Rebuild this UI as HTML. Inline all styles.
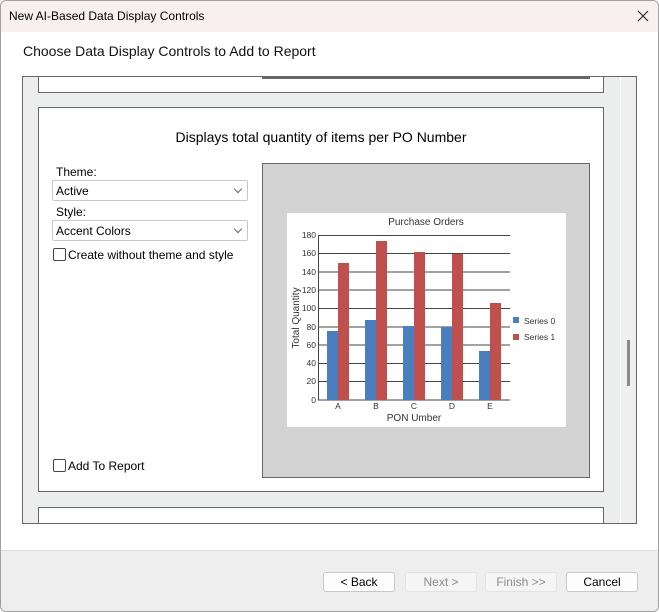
<!DOCTYPE html>
<html><head><style>
body{margin:0;width:659px;height:612px;overflow:hidden;font-family:"Liberation Sans",sans-serif;background:#fff;position:relative}
.a{position:absolute}
.t{font-size:12px;color:#000}
.sel{position:absolute;left:52px;width:196px;height:21px;border:1px solid #c8c8c8;background:#fff;border-radius:2px;font-size:12px;line-height:21px;box-sizing:border-box;padding-left:3px}
.sel:after{content:"";position:absolute;right:6px;top:5px;width:5px;height:5px;border-right:1px solid #666;border-bottom:1px solid #666;transform:rotate(45deg)}
.cb{position:absolute;width:11px;height:11px;border:1px solid #444;border-radius:2px;background:#fff}
.btn{position:absolute;top:572px;width:70px;height:18px;border:1px solid #c8c8c8;border-radius:3px;background:#fdfdfd;font-size:12px;text-align:center;line-height:18px}
.dis{color:#8a8a8a;background:#f5f5f5;border-color:#e2e2e2}
</style></head><body>
<div class="a" style="left:0;top:0;width:657px;height:610px;border:1px solid #a0a0a0;border-radius:6px;overflow:hidden;background:#fff">
<div class="a" style="left:0;top:0;width:657px;height:31px;background:#f8eff0"></div>
<div class="a t" style="left:8px;top:8px">New AI-Based Data Display Controls</div>
<svg class="a" style="left:636px;top:9px" width="12" height="12"><path d="M1 1L11 11M11 1L1 11" stroke="#222" stroke-width="1.1"/></svg>
<div class="a" style="left:22px;top:42px;font-size:14px;color:#111">Choose Data Display Controls to Add to Report</div>
<div class="a" style="left:0;top:549px;width:657px;height:61px;background:#eeeeee;border-top:1px solid #dcdcdc"></div>
</div>
<div class="a" style="left:22px;top:76px;width:613px;height:446px;border:1px solid #666;background:#eceeed;overflow:hidden">
 <div class="a" style="left:15px;top:-10px;width:564px;height:24px;border:1px solid #666;background:#fff"></div>
 <div class="a" style="left:239px;top:0;width:328px;height:2px;background:#666"></div>
 <div class="a" style="left:597px;top:0;width:1px;height:446px;background:#fff"></div>
 <div class="a" style="left:598px;top:0;width:15px;height:446px;background:#efefef"></div>
 <div class="a" style="left:604px;top:263px;width:3px;height:46px;background:#8a8a8a"></div>
 <div class="a" style="left:15px;top:30px;width:564px;height:383px;border:1px solid #666;background:#fff"></div>
 <div class="a" style="left:15px;top:430px;width:564px;height:30px;border:1px solid #666;background:#fff"></div>
</div>
<div class="a" style="left:38px;top:129px;width:566px;text-align:center;font-size:14px">Displays total quantity of items per PO Number</div>
<div class="a t" style="left:56px;top:165px">Theme:</div>
<div class="sel" style="top:180px">Active</div>
<div class="a t" style="left:56px;top:205px">Style:</div>
<div class="sel" style="top:220px">Accent Colors</div>
<div class="cb" style="left:53px;top:248px"></div><div class="a t" style="left:68px;top:248px">Create without theme and style</div>
<div class="cb" style="left:53px;top:459px"></div><div class="a t" style="left:68px;top:459px">Add To Report</div>
<div class="a" style="left:262px;top:163px;width:326px;height:313px;border:1px solid #666;background:#d3d3d3"></div>
<svg class="a" style="left:0;top:0" width="659" height="612" font-family="Liberation Sans,sans-serif">
<rect x="287" y="213" width="279" height="214" fill="#fff"/>
<text x="426" y="225" font-size="10" text-anchor="middle" fill="#333">Purchase Orders</text>
<g stroke="#444" stroke-width="1">
<line x1="318" y1="235.5" x2="510" y2="235.5"/><line x1="318" y1="253.5" x2="510" y2="253.5"/><line x1="318" y1="272" x2="510" y2="272"/><line x1="318" y1="290" x2="510" y2="290"/><line x1="318" y1="308.5" x2="510" y2="308.5"/><line x1="318" y1="327" x2="510" y2="327"/><line x1="318" y1="345" x2="510" y2="345"/><line x1="318" y1="363.5" x2="510" y2="363.5"/><line x1="318" y1="381.5" x2="510" y2="381.5"/><line x1="318" y1="400" x2="510" y2="400"/>
<line x1="318.5" y1="235" x2="318.5" y2="400"/></g>
<g font-size="8.5" fill="#333" text-anchor="end"><text x="316" y="238">180</text><text x="316" y="256">160</text><text x="316" y="275">140</text><text x="316" y="293">120</text><text x="316" y="311">100</text><text x="316" y="330">80</text><text x="316" y="348">60</text><text x="316" y="366">40</text><text x="316" y="384">20</text><text x="316" y="403">0</text></g>
<g fill="#4a7ebf"><rect x="327" y="331" width="11" height="69"/><rect x="365" y="320" width="11" height="80"/><rect x="403" y="326" width="11" height="74"/><rect x="441" y="327" width="11" height="73"/><rect x="479" y="351" width="11" height="49"/></g>
<g fill="#c0504d"><rect x="338" y="263" width="11" height="137"/><rect x="376" y="241" width="11" height="159"/><rect x="414" y="252" width="11" height="148"/><rect x="452" y="254" width="11" height="146"/><rect x="490" y="303" width="11" height="97"/></g>
<g font-size="8.5" fill="#333" text-anchor="middle"><text x="338" y="409">A</text><text x="376" y="409">B</text><text x="414" y="409">C</text><text x="452" y="409">D</text><text x="490" y="409">E</text></g>
<text x="414" y="421" font-size="10" text-anchor="middle" fill="#333">PON Umber</text>
<text transform="translate(299,318) rotate(-90)" font-size="10" text-anchor="middle" fill="#333">Total Quantity</text>
<rect x="513" y="317" width="6" height="6" fill="#4a7ebf"/><text x="524" y="324" font-size="8.5" fill="#333">Series 0</text>
<rect x="513" y="334" width="6" height="6" fill="#c0504d"/><text x="524" y="340" font-size="8.5" fill="#333">Series 1</text>
</svg>
<div class="btn" style="left:323px">&lt; Back</div>
<div class="btn dis" style="left:405px">Next &gt;</div>
<div class="btn dis" style="left:485px">Finish &gt;&gt;</div>
<div class="btn" style="left:566px">Cancel</div>
</body></html>
